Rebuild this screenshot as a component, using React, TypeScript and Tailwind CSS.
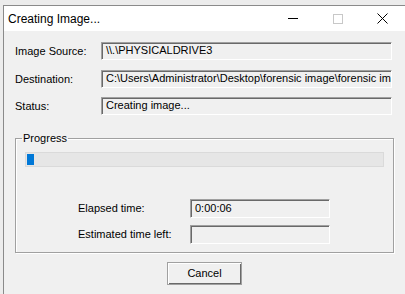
export default function App() {
  const field =
    "h-[18px] border border-t-[#a0a0a0] border-l-[#a0a0a0] border-r-white border-b-white bg-[#f0f0f0] pl-[4px] leading-[15px] overflow-hidden whitespace-nowrap shadow-[inset_1px_1px_0_#696969]";

  return (
    <div className="h-[294px] w-[405px] overflow-hidden bg-[#ececec] pl-[3px] pt-[5px] font-['Liberation_Sans',sans-serif] text-[11px] text-black">
      <div className="flex h-full flex-col border-l border-t border-[#8a8a8a] bg-[#f0f0f0]">
        {/* title bar */}
        <div className="flex h-[25px] items-center bg-white pl-[4px]">
          <span className="text-[12px]">Creating Image...</span>
          <div className="ml-auto flex h-full items-center">
            <div className="flex w-[45px] justify-center">
              <div className="h-px w-[10px] bg-black" />
            </div>
            <div className="flex w-[45px] justify-center">
              <div className="h-[10px] w-[10px] border border-[#c8c8c8]" />
            </div>
            <div className="flex w-[45px] justify-center">
              <svg width="11" height="11" viewBox="0 0 11 11">
                <path d="M0.5 0.5 L10.5 10.5 M10.5 0.5 L0.5 10.5" stroke="#000" strokeWidth="1" />
              </svg>
            </div>
          </div>
        </div>

        {/* body */}
        <div className="flex flex-col pl-[11px] pt-[11px]">
          <div className="flex items-center">
            <span className="w-[86px]">Image Source:</span>
            <div className={`${field} w-[291px]`}>\\.\PHYSICALDRIVE3</div>
          </div>
          <div className="mt-[10px] flex items-center">
            <span className="w-[86px]">Destination:</span>
            <div className={`${field} w-[291px] text-clip`}>
              C:\Users\Administrator\Desktop\forensic image\forensic ima
            </div>
          </div>
          <div className="mt-[9px] flex items-center">
            <span className="w-[86px]">Status:</span>
            <div className={`${field} w-[291px]`}>Creating image...</div>
          </div>

          <fieldset className="mt-[17px] h-[121px] w-[379px] border border-[#a0a0a0] px-[9px] shadow-[1px_1px_0_#fff,inset_1px_1px_0_#fff]">
            <legend className="ml-[-3px] px-px leading-[13px]">Progress</legend>
            <div className="mt-[7px] h-[15px] border border-[#dadada] bg-[#e6e6e6] p-px">
              <div className="h-full w-[7px] bg-[#0078d7]" />
            </div>
            <div className="mt-[32px] flex items-center pl-[53px]">
              <span className="w-[112px]">Elapsed time:</span>
              <div className={`${field} h-[19px] w-[140px] leading-[17px]`}>0:00:06</div>
            </div>
            <div className="mt-[7px] flex items-center pl-[53px]">
              <span className="w-[112px]">Estimated time left:</span>
              <div className={`${field} h-[19px] w-[140px]`} />
            </div>
          </fieldset>

          <div className="mt-[9px] flex w-[379px] justify-center">
            <button className="h-[23px] w-[75px] border border-[#a0a0a0] bg-[#f0f0f0] text-[11px] shadow-[inset_1px_1px_0_#fff,inset_-1px_-1px_0_#696969]">
              Cancel
            </button>
          </div>
        </div>
      </div>
    </div>
  );
}
